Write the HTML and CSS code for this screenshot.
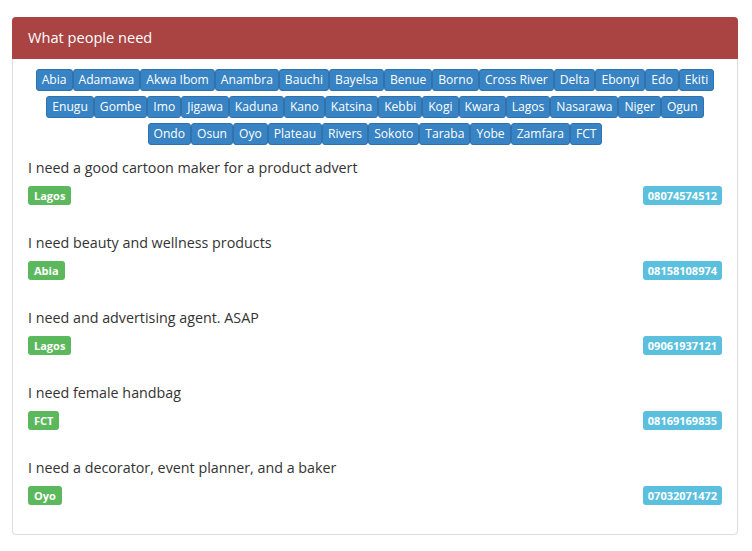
FILE: index.html
```html
<!DOCTYPE html>
<html>
<head>
<meta charset="utf-8">
<link rel="stylesheet" href="styles.css">
</head>
<body>
<div class="page">
  <div class="panel">
    <div class="panel-heading">What people need</div>
    <div class="panel-body">
      <div class="states">
        <a class="btn">Abia</a><a class="btn">Adamawa</a><a class="btn">Akwa Ibom</a><a class="btn">Anambra</a><a class="btn">Bauchi</a><a class="btn">Bayelsa</a><a class="btn">Benue</a><a class="btn">Borno</a><a class="btn">Cross River</a><a class="btn">Delta</a><a class="btn">Ebonyi</a><a class="btn">Edo</a><a class="btn">Ekiti</a><a class="btn">Enugu</a><a class="btn">Gombe</a><a class="btn">Imo</a><a class="btn">Jigawa</a><a class="btn">Kaduna</a><a class="btn">Kano</a><a class="btn">Katsina</a><a class="btn">Kebbi</a><a class="btn">Kogi</a><a class="btn">Kwara</a><a class="btn">Lagos</a><a class="btn">Nasarawa</a><a class="btn">Niger</a><a class="btn">Ogun</a><a class="btn">Ondo</a><a class="btn">Osun</a><a class="btn">Oyo</a><a class="btn">Plateau</a><a class="btn">Rivers</a><a class="btn">Sokoto</a><a class="btn">Taraba</a><a class="btn">Yobe</a><a class="btn">Zamfara</a><a class="btn">FCT</a>
      </div>
      <div class="item">
        <div class="need">I need a good cartoon maker for a product advert</div>
        <div class="meta"><span class="label label-success">Lagos</span><span class="label label-info">08074574512</span></div>
      </div>
      <div class="item">
        <div class="need">I need beauty and wellness products</div>
        <div class="meta"><span class="label label-success">Abia</span><span class="label label-info">08158108974</span></div>
      </div>
      <div class="item">
        <div class="need">I need and advertising agent. ASAP</div>
        <div class="meta"><span class="label label-success">Lagos</span><span class="label label-info">09061937121</span></div>
      </div>
      <div class="item">
        <div class="need">I need female handbag</div>
        <div class="meta"><span class="label label-success">FCT</span><span class="label label-info">08169169835</span></div>
      </div>
      <div class="item">
        <div class="need">I need a decorator, event planner, and a baker</div>
        <div class="meta"><span class="label label-success">Oyo</span><span class="label label-info">07032071472</span></div>
      </div>
    </div>
  </div>
</div>
</body>
</html>
```
FILE: styles.css
```css
* { box-sizing: border-box; }
body {
  margin: 0;
  background: #fff;
  font-family: "Open Sans", "Liberation Sans", sans-serif;
  color: #333;
  font-size: 14px;
}
.page {
  padding: 17px 14px 0 12px;
}
.panel {
  border: 1px solid #ddd;
  border-radius: 4px;
  box-shadow: 0 1px 1px rgba(0,0,0,0.05);
}
.panel-heading {
  background: #a94442;
  color: #fff;
  font-size: 14.6px;
  line-height: 20px;
  padding: 10px 15px 12px 16px;
  margin: -1px -1px 0 -1px;
  border-radius: 4px 4px 0 0;
}
.panel-body {
  padding: 10px 15px 14px 15px;
}
.states {
  display: flex;
  flex-wrap: wrap;
  justify-content: center;
  row-gap: 5px;
}
.btn {
  display: inline-block;
  background: #3783c3;
  border: 1px solid #2f72ad;
  color: #fff;
  font-size: 12.1px;
  line-height: 20px;
  padding: 0 5px;
  border-radius: 3px;
}
.item {
  padding: 12px 0 15px 0;
}
.need {
  line-height: 20px;
  font-size: 14.3px;
  padding-top: 1px;
  margin-bottom: -1px;
}
.meta {
  margin-top: 9px;
  display: flex;
  justify-content: space-between;
}
.label {
  display: inline-block;
  color: #fff;
  font-weight: bold;
  font-size: 11px;
  line-height: 19px;
  height: 19px;
  padding: 0 6px;
  border-radius: 3px;
}
.label-info { padding: 0 5px; }
.label-success { background: #5cb85c; }
.label-info { background: #5bc0de; }
```
